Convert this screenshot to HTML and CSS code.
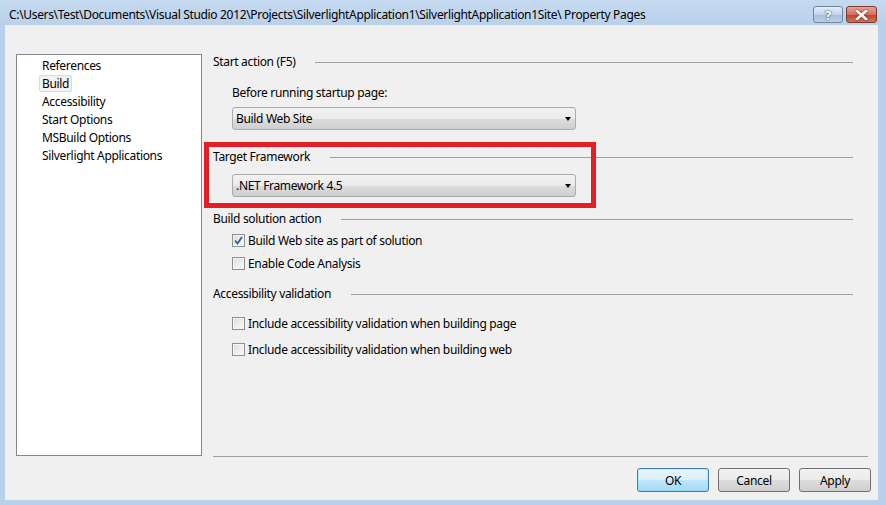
FILE: index.html
```html
<!DOCTYPE html>
<html lang="en">
<head>
<meta charset="UTF-8">
<title>Property Pages</title>
<link rel="stylesheet" href="styles.css">
</head>
<body>
<div class="window">
  <div class="titlebar">
    <span class="title">C:\Users\Test\Documents\Visual Studio 2012\Projects\SilverlightApplication1\SilverlightApplication1Site\ Property Pages</span>
    <div class="caption-buttons">
      <div class="cap-btn help-btn">?</div>
      <div class="cap-btn close-btn">
        <svg width="13" height="10" viewBox="0 0 13 10"><path d="M2 1 L11 9 M11 1 L2 9" stroke="#fff" stroke-width="2.6" stroke-linecap="square"/></svg>
      </div>
    </div>
  </div>

  <div class="client">
    <div class="content">
      <ul class="nav-list">
        <li>References</li>
        <li><span class="selected">Build</span></li>
        <li>Accessibility</li>
        <li>Start Options</li>
        <li>MSBuild Options</li>
        <li>Silverlight Applications</li>
      </ul>

      <div class="page">
        <div class="group-header h-start"><span>Start action (F5)</span><div class="rule"></div></div>
        <div class="label">Before running startup page:</div>
        <div class="combo c-start"><span>Build Web Site</span><div class="arrow"></div></div>

        <div class="group-header h-target"><span>Target Framework</span><div class="rule"></div></div>
        <div class="combo c-target"><span>.NET Framework 4.5</span><div class="arrow"></div></div>

        <div class="group-header h-build"><span>Build solution action</span><div class="rule"></div></div>
        <div class="check-row r1"><div class="checkbox checked">
          <svg width="9" height="9" viewBox="0 0 9 9"><path d="M1 4.5 L3.5 7.5 L8 1" fill="none" stroke="#3d5a98" stroke-width="1.8"/></svg>
        </div>Build Web site as part of solution</div>
        <div class="check-row r2"><div class="checkbox"></div>Enable Code Analysis</div>

        <div class="group-header h-access"><span>Accessibility validation</span><div class="rule"></div></div>
        <div class="check-row r3"><div class="checkbox"></div>Include accessibility validation when building page</div>
        <div class="check-row r4"><div class="checkbox"></div>Include accessibility validation when building web</div>

        <div class="separator"></div>
        <div class="highlight"></div>
      </div>
    </div>

    <div class="footer">
      <button class="btn default">OK</button>
      <button class="btn">Cancel</button>
      <button class="btn">Apply</button>
    </div>
  </div>
</div>
</body>
</html>
```

FILE: styles.css
```css
body {
  margin: 0;
  padding: 0;
  font-family: "Noto Sans", "Open Sans", sans-serif;
  font-size: 12px;
  letter-spacing: -0.33px;
  color: #000;
}
.window {
  width: 886px;
  height: 505px;
  background: #b9d1ea;
  display: flex;
  flex-direction: column;
}
.titlebar {
  height: 26px;
  display: flex;
  align-items: flex-start;
  background: linear-gradient(#c4d9ef, #b9d1ea);
}
.title {
  margin: 7px 0 0 9px;
  line-height: 16px;
  white-space: nowrap;
  flex: 1;
}
.caption-buttons {
  display: flex;
  gap: 3px;
  margin: 6px 9px 0 0;
}
.cap-btn {
  height: 17px;
  box-sizing: border-box;
  border-radius: 3px;
  display: flex;
  align-items: center;
  justify-content: center;
}
.help-btn {
  width: 30px;
  border: 1px solid #6d84a3;
  background: linear-gradient(#e4edf7, #c3d4e8 50%, #a9bfd9 51%, #bcd0e8);
  color: #fff;
  font-weight: bold;
  font-size: 13px;
  text-shadow: 0 0 2px #3a5478, 0 0 1px #3a5478;
}
.close-btn {
  width: 31px;
  border: 1px solid #7d3a33;
  background: linear-gradient(#e8a396, #d7705f 50%, #c2412c 51%, #d2735c);
}
.close-btn svg {
  filter: drop-shadow(0 0 1px #6b1a10);
}
.client {
  flex: 1;
  margin: 0 8px 5px 5px;
  background: #f0f0f0;
  padding: 29px 7px 8px 11px;
  display: flex;
  flex-direction: column;
}
.content {
  display: flex;
  height: 404px;
}
.nav-list {
  list-style: none;
  margin: 0;
  padding: 2px 0 0 0;
  width: 186px;
  height: 402px;
  box-sizing: border-box;
  background: #fff;
  border: 1px solid #828790;
}
.nav-list li {
  height: 18px;
  line-height: 18px;
  padding-left: 25px;
  white-space: nowrap;
}
.nav-list .selected {
  display: inline-block;
  margin-left: -3px;
  padding: 0 2px;
  line-height: 15px;
  background: #f2f2f2;
  border: 1px solid #d9d9d9;
  border-radius: 2px;
}
.page {
  flex: 1;
  margin-left: 11px;
  display: flex;
  flex-direction: column;
  position: relative;
}
.group-header {
  display: flex;
  align-items: center;
  height: 15px;
  line-height: 15px;
  margin-right: 18px;
  white-space: nowrap;
}
.group-header .rule {
  flex: 1;
  height: 1px;
  background: #a0a0a0;
  margin-left: 20px;
  margin-top: 1px;
}
.h-target { margin-top: 19px; }
.h-build { margin-top: 14px; }
.h-access { margin-top: 15px; }
.label {
  margin: 16px 0 0 19px;
  line-height: 15px;
}
.combo {
  margin-left: 19px;
  width: 344px;
  height: 23px;
  box-sizing: border-box;
  border: 1px solid #acacac;
  border-radius: 3px;
  background: linear-gradient(#f2f2f2, #ebebeb 50%, #dddddd 51%, #cfcfcf);
  display: flex;
  align-items: center;
  padding: 0 0 0 3px;
}
.combo span { flex: 1; }
.combo .arrow {
  width: 0;
  height: 0;
  border-left: 3.5px solid transparent;
  border-right: 3.5px solid transparent;
  border-top: 4px solid #000;
  margin-right: 4px;
}
.c-start { margin-top: 7px; }
.c-target { margin-top: 10px; }
.check-row {
  display: flex;
  align-items: center;
  height: 15px;
  margin-left: 19px;
  white-space: nowrap;
}
.r1 { margin-top: 7px; }
.r2 { margin-top: 8px; }
.r3 { margin-top: 15px; }
.r4 { margin-top: 11px; }
.checkbox {
  width: 13px;
  height: 13px;
  box-sizing: border-box;
  border: 1px solid #8e8f8f;
  background: linear-gradient(135deg, #dcdcdc, #fbfbfb);
  box-shadow: inset 0 0 0 1px #f4f4f4;
  margin-right: 3px;
  display: flex;
  align-items: center;
  justify-content: center;
}
.separator {
  margin-top: auto;
  margin-right: 3px;
  height: 1px;
  background: #a0a0a0;
  margin-bottom: 1px;
}
.highlight {
  position: absolute;
  left: -9px;
  top: 88px;
  width: 392px;
  height: 66px;
  box-sizing: border-box;
  border: 5px solid #e31e27;
}
.footer {
  margin-top: 10px;
  display: flex;
  justify-content: flex-end;
  gap: 9px;
}
.btn {
  width: 72px;
  height: 24px;
  font-family: inherit;
  font-size: 12px;
  letter-spacing: -0.33px;
  border: 1px solid #707070;
  border-radius: 3px;
  background: linear-gradient(#f2f2f2, #ebebeb 50%, #dddddd 51%, #cfcfcf);
  padding: 0;
}
.btn.default {
  border-color: #3c7fb1;
  box-shadow: inset 0 0 0 1px #48d8fb44;
  background: linear-gradient(#eaf6fd, #d9f0fc 50%, #bee6fd 51%, #a7d9f5);
}
```
